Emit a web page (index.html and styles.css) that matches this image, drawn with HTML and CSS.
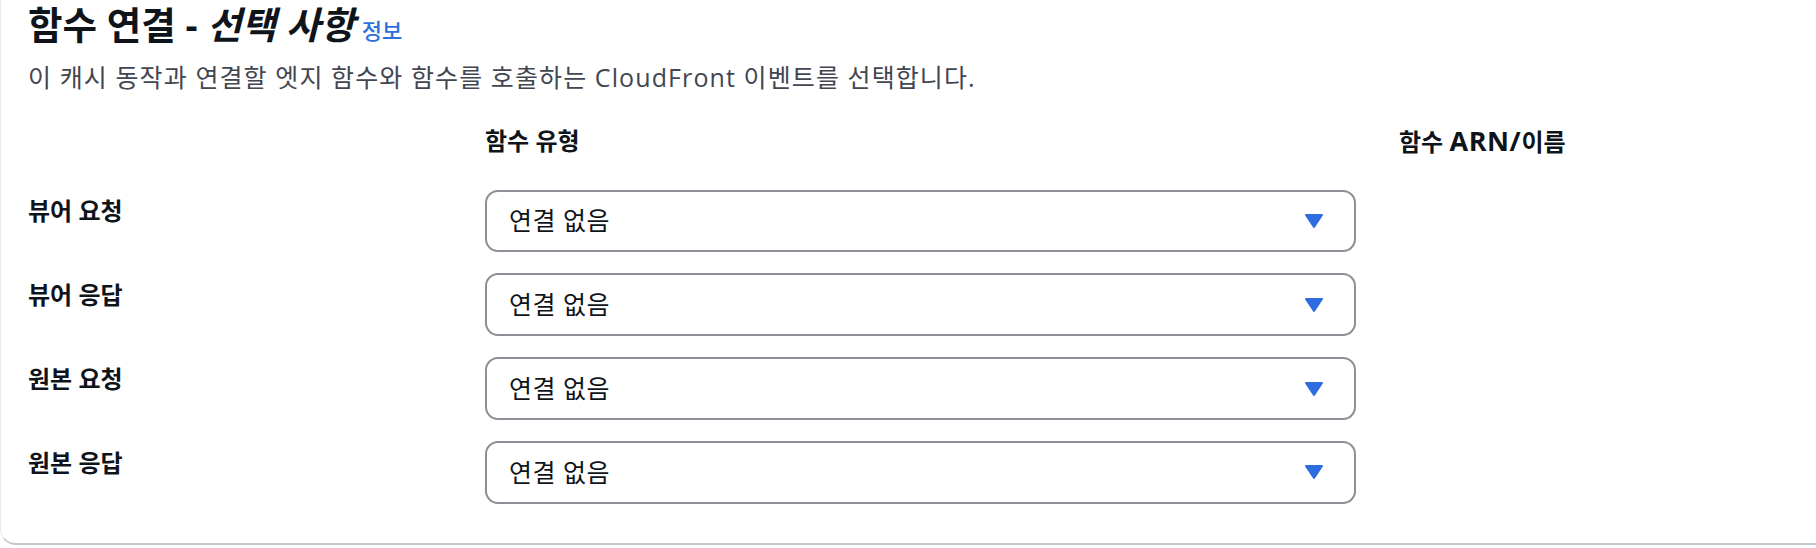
FILE: index.html
```html
<!DOCTYPE html>
<html lang="ko">
<head>
<meta charset="utf-8">
<title>함수 연결</title>
<link rel="stylesheet" href="styles.css">
</head>
<body>
<div class="card">
  <div class="header">
    <h2 class="title">함수 연결 - <em class="opt">선택 사항</em><a class="info" href="#">정보</a></h2>
    <p class="desc">이 캐시 동작과 연결할 엣지 함수와 함수를 호출하는 CloudFront 이벤트를 선택합니다.</p>
  </div>
  <div class="grid heads">
    <div></div>
    <div class="colhead">함수 유형</div>
    <div class="colhead">함수 <span class="lat">ARN/</span>이름</div>
  </div>
  <div class="grid rows">
    <div class="label">뷰어 요청</div>
    <div class="select"><span>연결 없음</span><svg class="caret" viewBox="0 0 20 16" width="20" height="16"><polygon points="2,2 18,2 10,14" /></svg></div>
    <div></div>
    <div class="label">뷰어 응답</div>
    <div class="select"><span>연결 없음</span><svg class="caret" viewBox="0 0 20 16" width="20" height="16"><polygon points="2,2 18,2 10,14" /></svg></div>
    <div></div>
    <div class="label">원본 요청</div>
    <div class="select"><span>연결 없음</span><svg class="caret" viewBox="0 0 20 16" width="20" height="16"><polygon points="2,2 18,2 10,14" /></svg></div>
    <div></div>
    <div class="label">원본 응답</div>
    <div class="select"><span>연결 없음</span><svg class="caret" viewBox="0 0 20 16" width="20" height="16"><polygon points="2,2 18,2 10,14" /></svg></div>
    <div></div>
  </div>
</div>
</body>
</html>
```

FILE: styles.css
```css
* { box-sizing: border-box; }
html, body { margin: 0; padding: 0; background: #ffffff; }
body {
  font-family: "Open Sans", "Noto Sans CJK KR", sans-serif;
  color: #0f141a;
  font-size: 24px;
  line-height: 35px;
}
.card {
  background: #ffffff;
  border-left: 1px solid #ededf0;
  border-bottom: 2px solid #c6c6cd;
  border-bottom-left-radius: 16px;
  padding: 4px 0 41.5px 27px;
  height: 545px;
}
.header { margin-bottom: 28px; }
.title {
  margin: 0;
  font-size: 37.5px;
  line-height: 42px;
  font-weight: 700;
  display: flex;
  align-items: baseline;
}
.opt { font-style: italic; margin-left: 0.25em; }
.info {
  font-size: 22px;
  font-weight: 500;
  color: #2e6fdc;
  text-decoration: none;
  margin-left: 7px;
}
.desc {
  margin: 9px 0 0 0;
  color: #424650;
  font-size: 25px;
  letter-spacing: 1.1px;
}
.grid {
  display: grid;
  grid-template-columns: 414px 871px 1fr;
  column-gap: 43px;
}
.heads { margin-bottom: 30.5px; }
.colhead { font-weight: 700; }
.lat { font-size: 27px; letter-spacing: 0.6px; }
.rows { row-gap: 21.4px; }
.label { font-weight: 700; padding-top: 3.5px; }
.select {
  height: 62.5px;
  border: 2px solid #8e8e96;
  border-radius: 13px;
  display: flex;
  align-items: center;
  justify-content: space-between;
  padding: 0 30px 0 22px;
  font-size: 25px;
  letter-spacing: 0.5px;
}
.caret { display: block; }
.caret polygon {
  fill: #2e6cdf;
  stroke: #2e6cdf;
  stroke-width: 2;
  stroke-linejoin: round;
}
```
